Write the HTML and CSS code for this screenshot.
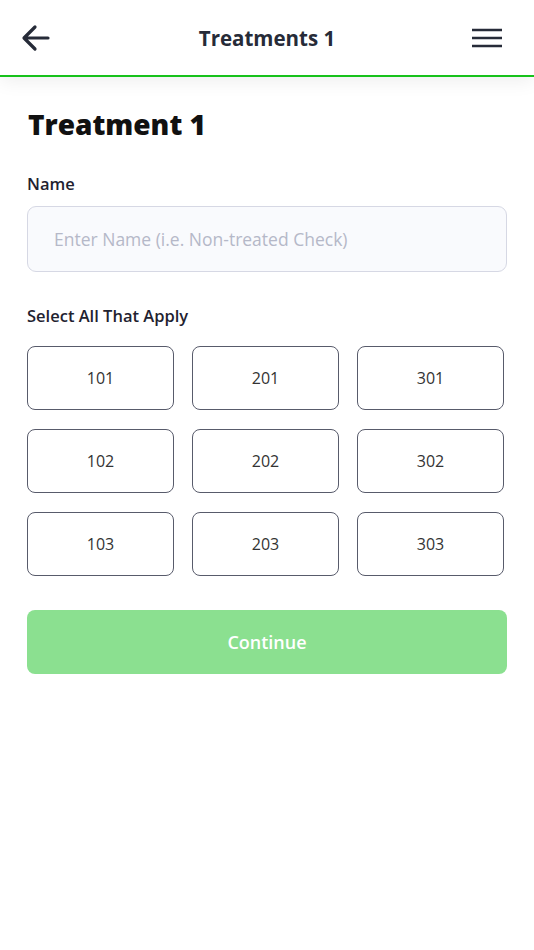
FILE: index.html
```html
<!DOCTYPE html>
<html>
<head>
	<title>Treatments 1</title>
	<link rel="stylesheet" href="styles.css">
</head>
<body>
	<header class="topbar">
		<button class="icon-btn back">
			<svg width="30" height="28" viewBox="0 0 30 28">
				<path d="M27 14H4M14 3L3 14l11 11" fill="none" stroke="#262b38" stroke-width="3.2" stroke-linecap="round" stroke-linejoin="round"/>
			</svg>
		</button>
		<h2 class="topbar-title">Treatments 1</h2>
		<button class="icon-btn menu">
			<svg width="32" height="22" viewBox="0 0 32 22">
				<path d="M1 3h30M1 11h30M1 19h30" fill="none" stroke="#262b38" stroke-width="2.6"/>
			</svg>
		</button>
	</header>

	<main class="content">
		<h1 class="page-title">Treatment 1</h1>

		<label class="field-label" for="name">Name</label>
		<input class="text-input" id="name" type="text" placeholder="Enter Name (i.e. Non-treated Check)">

		<p class="field-label select-label">Select All That Apply</p>
		<div class="plot-grid">
			<button class="plot">101</button>
			<button class="plot">201</button>
			<button class="plot">301</button>
			<button class="plot">102</button>
			<button class="plot">202</button>
			<button class="plot">302</button>
			<button class="plot">103</button>
			<button class="plot">203</button>
			<button class="plot">303</button>
		</div>

		<button class="continue-btn">Continue</button>
	</main>
</body>
</html>
```

FILE: styles.css
```css
body {
	font-family: "Open Sans", "Noto Sans", sans-serif;
	background-color: #fff;
	margin: 0;
	padding: 0;
	color: #262b38;
}

.topbar {
	height: 75px;
	display: flex;
	align-items: center;
	justify-content: space-between;
	padding: 0 31px 0 21px;
	border-bottom: 2px solid #17c21b;
	box-shadow: 0 4px 18px rgba(0,0,0,0.07);
	position: relative;
}

.icon-btn {
	background: none;
	border: none;
	padding: 0;
	display: flex;
	cursor: pointer;
}

.topbar-title {
	margin: 0;
	font-size: 20.5px;
	font-weight: 700;
	color: #262b38;
	padding-left: 12px;
}

.content {
	padding: 0 27px;
}

.page-title {
	margin: 26px 0 0 1px;
	font-size: 28px;
	font-weight: 800;
	color: #111;
	line-height: 42px;
}

.field-label {
	display: block;
	margin: 27px 0 0 0;
	font-size: 16.5px;
	font-weight: 600;
	color: #1f2230;
	line-height: 24px;
}

.text-input {
	display: block;
	box-sizing: border-box;
	width: 100%;
	height: 66px;
	margin-top: 10px;
	padding: 0 26px;
	border: 1.5px solid #d6d8e4;
	border-radius: 9px;
	background-color: #f9fafd;
	font-family: "Open Sans", sans-serif;
	font-size: 17.5px;
	color: #333;
}

.text-input::placeholder {
	color: #b5b8c8;
}

.select-label {
	margin-top: 32px;
}

.plot-grid {
	display: grid;
	grid-template-columns: repeat(3, 147px);
	column-gap: 18px;
	row-gap: 19px;
	margin-top: 18px;
}

.plot {
	height: 64px;
	background: #fff;
	border: 1.5px solid #585b6b;
	border-radius: 8px;
	font-family: "Open Sans", sans-serif;
	font-size: 16px;
	color: #333;
}

.continue-btn {
	display: block;
	width: 100%;
	height: 64px;
	margin-top: 34px;
	border: none;
	border-radius: 8px;
	background-color: #8be090;
	color: #fff;
	font-family: "Open Sans", sans-serif;
	font-size: 18px;
	font-weight: 600;
}
```
